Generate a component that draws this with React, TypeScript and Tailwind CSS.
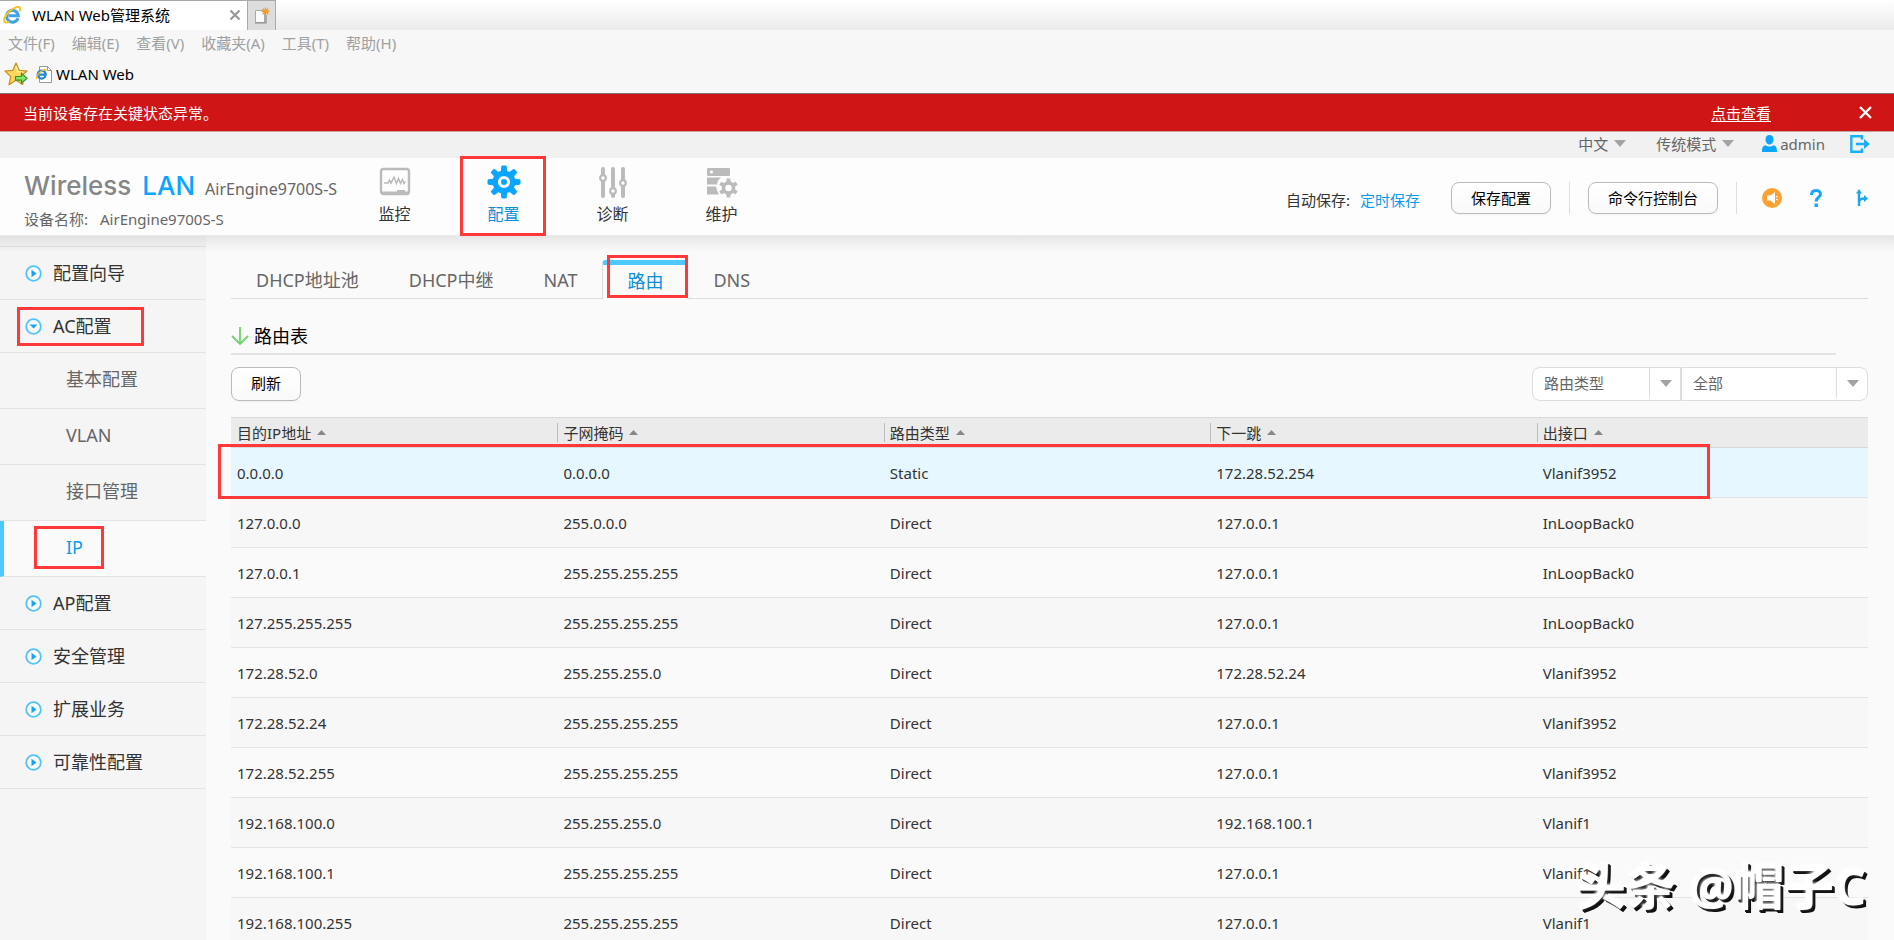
import React from "react";

const menus = ["文件(F)", "编辑(E)", "查看(V)", "收藏夹(A)", "工具(T)", "帮助(H)"];

const sideItems = [
  { id: 1, name: "配置向导" },
  { id: 2, name: "AC配置", open: true, marked: true },
  { id: 3, name: "AP配置" },
  { id: 4, name: "安全管理" },
  { id: 5, name: "扩展业务" },
  { id: 6, name: "可靠性配置" },
];

const subItems = [
  { id: 1, name: "基本配置" },
  { id: 2, name: "VLAN" },
  { id: 3, name: "接口管理" },
  { id: 4, name: "IP", active: true },
];

const tabs = ["DHCP地址池", "DHCP中继", "NAT", "路由", "DNS"];

const columns = ["目的IP地址", "子网掩码", "路由类型", "下一跳", "出接口"];

const routes = [
  ["0.0.0.0", "0.0.0.0", "Static", "172.28.52.254", "Vlanif3952"],
  ["127.0.0.0", "255.0.0.0", "Direct", "127.0.0.1", "InLoopBack0"],
  ["127.0.0.1", "255.255.255.255", "Direct", "127.0.0.1", "InLoopBack0"],
  ["127.255.255.255", "255.255.255.255", "Direct", "127.0.0.1", "InLoopBack0"],
  ["172.28.52.0", "255.255.255.0", "Direct", "172.28.52.24", "Vlanif3952"],
  ["172.28.52.24", "255.255.255.255", "Direct", "127.0.0.1", "Vlanif3952"],
  ["172.28.52.255", "255.255.255.255", "Direct", "127.0.0.1", "Vlanif3952"],
  ["192.168.100.0", "255.255.255.0", "Direct", "192.168.100.1", "Vlanif1"],
  ["192.168.100.1", "255.255.255.255", "Direct", "127.0.0.1", "Vlanif1"],
  ["192.168.100.255", "255.255.255.255", "Direct", "127.0.0.1", "Vlanif1"],
];

const Mark = ({ className }: { className: string }) => (
  <span
    className={`pointer-events-none absolute z-10 border-3 border-[#ff3939] ${className}`}
  />
);

const Caret = () => (
  <svg width="12" height="7" viewBox="0 0 12 7" className="shrink-0">
    <path d="M0 0h12L6 7z" fill="#a3a3a3" />
  </svg>
);

const IeIcon = ({ size }: { size: number }) => (
  <svg width={size} height={size} viewBox="0 0 18 18" className="shrink-0">
    <path
      d="M15 12.200A5.900 5.900 0 1 1 15.300 9.700H5.500"
      fill="none"
      stroke="#3fa2e6"
      strokeWidth="3"
    />
    <path
      d="M3.200 16.600C-.8 16 1.400 9.500 7 4.800 11.500 1 16.500-.4 17.100 2.300c.2 1-.1 2-.7 3.100"
      fill="none"
      stroke="#f7c21f"
      strokeWidth="2"
    />
    <path d="M3.200 16.600c1.200.2 2.300-.2 3.600-1" fill="none" stroke="#f7c21f" strokeWidth="1.600" />
  </svg>
);

const StarIcon = () => (
  <svg width="24" height="24" viewBox="0 0 24 24">
    <path
      d="M12 1l3.200 7.300 7.800.7-5.800 5.400 1.700 8L12 18.300 5 22.800l1.700-8.200L1 9l7.800-.7z"
      fill="#fbd65a"
      stroke="#c98d1e"
      strokeWidth="1.200"
      strokeLinejoin="round"
    />
    <path d="M12 4l2 5.500 4.500.6" fill="none" stroke="#fff0b0" strokeWidth="1.400" />
    <path
      d="M11.500 14.500h6v-3.200l5.500 5-5.500 5v-3.200h-6z"
      fill="#8be36a"
      stroke="#2f9a2b"
      strokeWidth="1.200"
    />
  </svg>
);

const MonitorIcon = () => (
  <svg width="32" height="32" viewBox="0 0 32 32">
    <rect x="2" y="3" width="28" height="25" rx="2.500" fill="none" stroke="#bbb" strokeWidth="2.400" />
    <path d="M2 27h28" stroke="#bbb" strokeWidth="3" />
    <path d="M18 27v-3h8v3z" fill="#bbb" />
    <path
      d="M5 17h4l1.500-3 1.500 3 3-6 2.500 6.500 2-5 2 5 2-4 1.500 4 1.500-2"
      fill="none"
      stroke="#bbb"
      strokeWidth="1.500"
    />
  </svg>
);

const teeth = [0, 45, 90, 135, 180, 225, 270, 315];
const smallTeeth = [0, 60, 120, 180, 240, 300];

const GearIcon = () => (
  <svg width="34" height="34" viewBox="0 0 34 34">
    {teeth.map((deg) => (
      <path
        key={deg}
        d="M13.800 6.500L14.300 1.500Q14.500.5 15.500.5h3q1 0 1.200 1l.5 5z"
        transform={`rotate(${deg} 17 17)`}
        fill="#0aa5ff"
      />
    ))}
    <circle cx="17" cy="17" r="8.800" fill="none" stroke="#0aa5ff" strokeWidth="5.400" />
    <circle cx="17" cy="17" r="3" fill="#0aa5ff" />
  </svg>
);

const SlidersIcon = () => (
  <svg width="32" height="32" viewBox="0 0 32 32" fill="none" stroke="#bbb">
    <path d="M6 3v27M16 3v27M26 3v27" strokeWidth="4" strokeLinecap="round" />
    <g fill="#fff" strokeWidth="2.200">
      <circle cx="6" cy="12" r="2.800" />
      <circle cx="16" cy="25" r="2.800" />
      <circle cx="26" cy="17" r="2.800" />
    </g>
  </svg>
);

const MaintainIcon = () => (
  <svg width="32" height="32" viewBox="0 0 32 32">
    <rect x="1" y="2" width="23" height="8" rx="1" fill="#bbb" />
    <circle cx="5.500" cy="6" r="1.600" fill="#fdfdfd" />
    <path d="M1 11.500h14l-3 3-1 4H1zM1 20.500h9l1 4 2 4H1z" fill="#bbb" />
    <g transform="translate(22.500 22)">
      {smallTeeth.map((deg) => (
        <path key={deg} d="M-2.200-5l.4-4.500h3.600l.4 4.500z" transform={`rotate(${deg})`} fill="#bbb" />
      ))}
      <circle r="5" fill="none" stroke="#bbb" strokeWidth="3.600" />
    </g>
  </svg>
);

const navItems = [
  { id: 1, name: "监控", icon: <MonitorIcon /> },
  { id: 2, name: "配置", icon: <GearIcon />, active: true },
  { id: 3, name: "诊断", icon: <SlidersIcon /> },
  { id: 4, name: "维护", icon: <MaintainIcon /> },
];

const Bullet = ({ open }: { open?: boolean }) => (
  <svg width="17" height="17" viewBox="0 0 17 17" className="shrink-0">
    <circle cx="8.500" cy="8.500" r="7.300" fill="#fdfdfd" stroke="#4fc3ff" strokeWidth="1.800" />
    <path d={open ? "M4.500 6.500h8l-4 4z" : "M6.500 4.800v7.400l5-3.700z"} fill="#14a3f5" />
  </svg>
);

function SideLink({ item }: { item: (typeof sideItems)[number] }) {
  return (
    <a
      href="#"
      className="relative flex h-[53px] items-center border-b border-[#e3e3e3] pl-[25px] text-lg text-[#333]"
    >
      <Bullet open={item.open} />
      <span className="ml-[11px]">{item.name}</span>
      {item.marked && <Mark className="top-[7px] left-[17px] h-[39px] w-[127px]" />}
    </a>
  );
}

function BrowserBar() {
  return (
    <div className="border-b border-[#777] bg-[#f7f7f7]">
      <div className="flex h-[30px] bg-gradient-to-b from-white to-[#ebebeb]">
        <div className="flex w-[247px] items-center border-t border-[#aaa] bg-white pr-[6px] pb-px pl-[3px] text-black">
          <IeIcon size={18} />
          <span className="ml-[11px]">WLAN Web管理系统</span>
          <button aria-label="关闭标签页" className="ml-auto">
            <svg width="12" height="12" viewBox="0 0 12 12">
              <path d="M1.500 1.500l9 9m0-9l-9 9" stroke="#999" strokeWidth="2.200" />
            </svg>
          </button>
        </div>
        <button
          aria-label="新建标签页"
          className="flex w-[29px] items-center justify-center border border-b-0 border-[#aaa] bg-[#ddd]"
        >
          <svg width="16" height="18" viewBox="0 0 16 18">
            <path d="M1.500 3.500h9v12h-9z" fill="#fafafa" stroke="#aaa" />
            <path d="M1 16h11V8" fill="none" stroke="#888" strokeWidth="1.200" />
            <path d="M11.500.500v8M7.500 4.500h8M8.700 1.700l5.600 5.600M14.300 1.700L8.700 7.300" stroke="#f29b26" strokeWidth="1.300" />
          </svg>
        </button>
      </div>
      <div className="flex h-[26px] items-center gap-[17px] pl-2 text-[#a0a0a0]">
        {menus.map((menu) => (
          <button key={menu}>{menu}</button>
        ))}
      </div>
      <div className="flex h-[37px] items-center pb-px pl-1 text-black">
        <StarIcon />
        <a href="#" className="ml-2 flex items-center gap-1">
          <svg width="16" height="17" viewBox="0 0 16 17">
            <path d="M3.500.500h8l4 4v12h-12z" fill="#fff" stroke="#999" />
            <path d="M11.500.500v4h4" fill="none" stroke="#999" />
            <svg x="0" y="3" width="11" height="11" viewBox="0 0 18 18">
              <path d="M15.600 11.400A6.600 6.600 0 1 1 16 9.200H5.600" fill="none" stroke="#1e87d6" strokeWidth="3.600" />
              <path d="M2 16.600C-1 14 4 6 9 3.500 13 1 17-.5 17 3" fill="none" stroke="#f5bd1c" strokeWidth="2" />
            </svg>
          </svg>
          WLAN Web
        </a>
      </div>
    </div>
  );
}

function Header() {
  return (
    <header>
      <div className="flex h-[38px] items-center border-b border-[#c8a0a0] bg-[#cf1515] pr-[22px] pl-[23px] text-white">
        <span>当前设备存在关键状态异常。</span>
        <a href="#" className="ml-auto underline underline-offset-2">
          点击查看
        </a>
        <button aria-label="关闭" className="ml-[88px]">
          <svg width="13" height="13" viewBox="0 0 13 13">
            <path d="M1 1l11 11M12 1L1 12" stroke="#fff" strokeWidth="2.400" />
          </svg>
        </button>
      </div>

      <div className="flex h-[26px] items-center justify-end bg-[#f1f1f1] pr-6 pb-[3px] text-[#666]">
        <button className="flex items-center gap-[6px]">
          中文
          <Caret />
        </button>
        <button className="ml-[30px] flex items-center gap-[6px]">
          传统模式
          <Caret />
        </button>
        <a href="#" className="ml-7 flex items-center gap-[3px]">
          <svg width="15" height="17" viewBox="0 0 15 17" fill="#0aa5ff">
            <path d="M7.500 0c2.600 0 4 1.800 4 4.500S9.800 9.500 7.500 9.500 3.500 7.200 3.500 4.500 4.900 0 7.500 0z" />
            <path d="M0 17c0-4.500 1-6.500 3.800-6.700 1.100 1 2.300 1.300 3.700 1.300s2.600-.3 3.700-1.300C14 10.500 15 12.500 15 17z" />
          </svg>
          admin
        </a>
        <button aria-label="退出" className="ml-[25px]">
          <svg width="20" height="18" viewBox="0 0 20 18">
            <path d="M12 4.500V1.300H1.300v15.400H12v-3.200" fill="none" stroke="#1ab0ff" strokeWidth="2.400" />
            <path d="M6 7.700h8V4l6 5-6 5v-3.700H6z" fill="#1ab0ff" />
          </svg>
        </button>
      </div>

      <div className="flex h-[78px] border-b border-[#e9e9e9] bg-[#fdfdfd]">
        <div className="w-[340px] pt-3 pl-6 text-[#666]">
          <div className="flex items-baseline gap-[10px] whitespace-nowrap">
            <span className="flex gap-[11px] font-[Inter] text-[26px] leading-8 font-medium text-[#868686]">
              <span>Wireless</span>
              <span className="text-[#0aa5ff]">LAN</span>
            </span>
            <span className="text-base">AirEngine9700S-S</span>
          </div>
          <div className="mt-[5px] flex gap-3">
            <span>设备名称:</span>
            <span>AirEngine9700S-S</span>
          </div>
        </div>

        <nav className="flex">
          {navItems.map((item) => (
            <a
              key={item.id}
              href="#"
              className={`relative flex w-[109px] flex-col items-center pt-[6px] text-base ${
                item.active ? "text-[#0a8fd8]" : "text-[#333]"
              }`}
            >
              <span className="flex h-9 items-center">{item.icon}</span>
              <span className="mt-[2px]">{item.name}</span>
              {item.active && (
                <Mark className="-top-[2px] left-[11px] h-20 w-[86px]" />
              )}
            </a>
          ))}
        </nav>

        <div className="ml-auto flex items-center pt-[3px] pr-[26px] text-[#333]">
          <span className="pt-1">自动保存:</span>
          <a href="#" className="ml-[10px] pt-1 text-[#0a9bec]">
            定时保存
          </a>
          <button className="ml-[31px] h-8 rounded-lg border border-[#bbb] bg-gradient-to-b from-white to-[#f9f9f9] px-[19px] text-black shadow-xs">
            保存配置
          </button>
          <span className="mx-[18px] h-8 w-px bg-[#ddd]" />
          <button className="h-8 rounded-lg border border-[#bbb] bg-gradient-to-b from-white to-[#f9f9f9] px-[19px] text-black shadow-xs">
            命令行控制台
          </button>
          <span className="mr-[25px] ml-[18px] h-8 w-px bg-[#ddd]" />
          <button aria-label="公告">
            <svg width="20" height="20" viewBox="0 0 20 20">
              <circle cx="10" cy="10" r="10" fill="#ffa033" />
              <path d="M5 7.500h3.500L13 4v12l-4.500-3.500H5z" fill="#fff" />
              <path d="M14 9l2-1m-2 3l2 1" stroke="#fff" />
            </svg>
          </button>
          <button aria-label="帮助" className="ml-[28px]">
            <svg width="12" height="18" viewBox="0 0 12 18">
              <path
                d="M1.500 6C1.500 2.500 3.500 1.500 6 1.500S10.500 3 10.500 5.200c0 3.200-4.300 3-4.300 7.300"
                fill="none"
                stroke="#14a8ff"
                strokeWidth="3"
              />
              <path d="M4.500 14.500h3.400V18H4.500z" fill="#14a8ff" />
            </svg>
          </button>
          <button aria-label="导航" className="ml-[34px]">
            <svg width="12" height="18" viewBox="0 0 12 18">
              <path d="M3 17V3M3 14c0-3.500 1.500-4.500 6-4.500" fill="none" stroke="#1aa5f0" strokeWidth="2.400" />
              <path d="M0 4.500L3 0l3 4.500zM8 6l4 3.500L8 13z" fill="#1aa5f0" />
            </svg>
          </button>
        </div>
      </div>
    </header>
  );
}

function Sidebar() {
  return (
    <aside className="w-[206px] shrink-0 bg-[#f5f5f5] pt-[10px]">
      <div className="border-t border-[#e3e3e3]">
        {sideItems.slice(0, 2).map((item) => (
          <SideLink key={item.id} item={item} />
        ))}
        {subItems.map((item) => (
          <a
            key={item.id}
            href="#"
            className={`relative flex h-14 items-center border-b border-[#e3e3e3] pb-[3px] text-lg ${
              item.active
                ? "border-l-4 border-l-[#4fc8ff] bg-[#fafafa] pl-[62px] text-[#0a9bec]"
                : "pl-[66px] text-[#666]"
            }`}
          >
            {item.name}
            {item.active && (
              <Mark className="top-[5px] left-[30px] h-[43px] w-[70px]" />
            )}
          </a>
        ))}
        {sideItems.slice(2).map((item) => (
          <SideLink key={item.id} item={item} />
        ))}
      </div>
    </aside>
  );
}

function RouteTable() {
  return (
    <table className="mt-4 w-full table-fixed border-separate border-spacing-0 text-left text-[#333]">
      <colgroup>
        <col className="w-[19.94%]" />
        <col className="w-[19.94%]" />
        <col className="w-[19.94%]" />
        <col className="w-[19.94%]" />
        <col />
      </colgroup>
      <thead>
        <tr className="bg-[#ebebeb]">
          {columns.map((name, i) => (
            <th key={name} className="h-[31px] border-y border-[#d9d9d9] p-0 font-normal">
              <div
                className={`flex h-[19px] items-center gap-[6px] ${
                  i === 0 ? "pl-[6px]" : "border-l border-[#bbb] pl-[5px]"
                }`}
              >
                {name}
                <svg width="9" height="5" viewBox="0 0 9 5">
                  <path d="M0 5h9L4.500 0z" fill="#888" />
                </svg>
              </div>
            </th>
          ))}
        </tr>
      </thead>
      <tbody>
        {routes.map((route, i) => (
          <tr
            key={route[0]}
            className="relative even:bg-[#f7f7f7] first:bg-[#e7f7ff]"
          >
            {route.map((value, j) => (
              <td key={j} className="h-[50px] border-b border-[#e3e3e3] p-0 pl-[6px]">
                {value}
                {i === 0 && j === 0 && (
                  <Mark className="-top-1 right-[158px] -left-[13px] h-[55px]" />
                )}
              </td>
            ))}
          </tr>
        ))}
      </tbody>
    </table>
  );
}

export default function App() {
  return (
    <div className="relative flex h-screen flex-col overflow-hidden bg-[#fafafa] font-['Noto_Sans','Noto_Sans_CJK_SC',sans-serif] text-[15px] leading-6">
      <BrowserBar />
      <Header />

      <div className="relative flex min-h-0 flex-1">
        {/* Header shadow */}
        <div className="pointer-events-none absolute inset-x-0 top-0 h-4 bg-gradient-to-b from-black/8 to-transparent" />

        <Sidebar />

        <main className="min-w-0 flex-1 pt-6 pr-[26px] pl-[25px]">
          {/* Tabs */}
          <nav className="flex h-[39px] border-b border-[#dcdcdc] text-lg text-[#666]">
            {tabs.map((tab) =>
              tab === "路由" ? (
                <a
                  key={tab}
                  href="#"
                  className="relative -mb-px flex items-center rounded-t border-x border-t-5 border-x-[#dcdcdc] border-t-[#4fc8ff] bg-[#fafafa] px-6 pb-[3px] text-[#0a8fd8]"
                >
                  {tab}
                  <Mark className="-top-[10px] -right-px left-1 h-[43px]" />
                </a>
              ) : (
                <a key={tab} href="#" className="flex items-center px-[25px] pt-px">
                  {tab}
                </a>
              )
            )}
          </nav>

          {/* Section title */}
          <div className="mr-8 flex h-14 items-end gap-[5px] border-b-2 border-[#e3e3e3] pb-[5px]">
            <svg width="18" height="24" viewBox="0 0 18 24">
              <path d="M9 3v17M1 12l8 8 8-8" fill="none" stroke="#6fd36a" strokeWidth="1.800" />
            </svg>
            <h2 className="text-lg leading-6 text-black">路由表</h2>
          </div>

          <div className="mt-3 flex justify-between">
            <button className="h-[34px] rounded-lg border border-[#bbb] bg-gradient-to-b from-white to-[#f9f9f9] px-[19px] pb-[2px] text-black shadow-xs">
              刷新
            </button>
            <div className="flex text-[#666]">
              <div className="relative">
                <select
                  aria-label="筛选条件"
                  className="h-[34px] w-[149px] appearance-none rounded-l-lg border border-[#ddd] bg-white pb-[2px] pl-[11px]"
                >
                  <option>路由类型</option>
                </select>
                <span className="pointer-events-none absolute top-px right-0 flex h-[30px] w-8 items-center justify-center border-l border-[#ddd]">
                  <Caret />
                </span>
              </div>
              <div className="relative">
                <select
                  aria-label="路由类型"
                  className="h-[34px] w-[187px] appearance-none rounded-r-lg border border-[#ddd] bg-white pb-[2px] pl-[11px]"
                >
                  <option>全部</option>
                </select>
                <span className="pointer-events-none absolute top-px right-0 flex h-[30px] w-8 items-center justify-center border-l border-[#ddd]">
                  <Caret />
                </span>
              </div>
            </div>
          </div>

          <RouteTable />
        </main>
      </div>

      {/* Author stamp */}
      <div className="pointer-events-none absolute right-7 bottom-6 text-[50px] leading-[60px] font-bold text-white [text-shadow:-1px_-1px_3px_#fff,2px_2px_0_#111,3px_3px_0_#111]">
        头条 @帽子C
      </div>
    </div>
  );
}
